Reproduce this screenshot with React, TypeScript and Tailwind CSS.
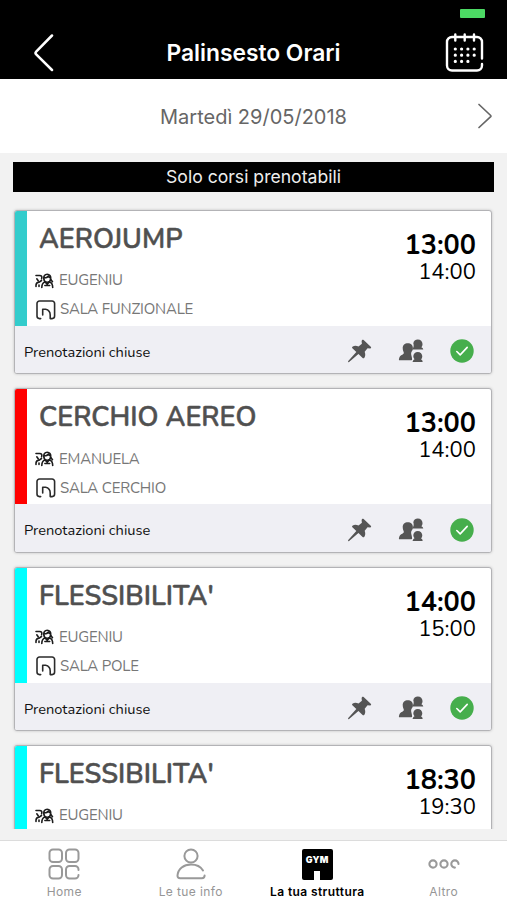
import React from "react";

type Course = {
  title: string;
  trainer: string;
  room?: string;
  start: string;
  end: string;
  stripe: string;
};

const courses: Course[] = [
  { title: "AEROJUMP", trainer: "EUGENIU", room: "SALA FUNZIONALE", start: "13:00", end: "14:00", stripe: "bg-[#33cccc]" },
  { title: "CERCHIO AEREO", trainer: "EMANUELA", room: "SALA CERCHIO", start: "13:00", end: "14:00", stripe: "bg-[#ff0000]" },
  { title: "FLESSIBILITA'", trainer: "EUGENIU", room: "SALA POLE", start: "14:00", end: "15:00", stripe: "bg-[#00ffff]" },
  { title: "FLESSIBILITA'", trainer: "EUGENIU", start: "18:30", end: "19:30", stripe: "bg-[#00ffff]" },
];

function TrainerIcon() {
  return (
    <svg className="h-[16px] w-[19px] shrink-0" viewBox="0 0 19 16" fill="none" stroke="#1c1c1c" strokeWidth="1.600" strokeLinecap="round" strokeLinejoin="round">
      <path d="M1 2.500h3.600c2.200 0 2.600 1.500 2 3.200M1.800 5.800l1.400 2M1 13.500v-1.300c0-1.800 1-2.700 2.900-2.900L6.500 7.500M4 12v1.500" />
      <path d="M8.800 5.800C8.400 3 9.900 1.200 12.200 1.200s3.900 1.800 3.500 4.600c-.2 1.800-1.500 3.400-3.500 3.400S9 7.600 8.800 5.800ZM9 5c2.300 0 3.600-.6 4.200-1.800.5 1 1.200 1.700 2.300 1.800" />
      <path d="M6.800 14.500c0-3.200.9-4.900 3.200-5.600l2.200 2.200 2.200-2.200c2.600.7 3.300 2.400 3.300 5.600M9.900 12.500h4.800M15.800 6.500l1.700 2.200" />
    </svg>
  );
}

function RoomIcon() {
  return (
    <svg className="h-[20px] w-[20px] shrink-0" viewBox="0 0 20 20" fill="none" stroke="#2b2b2b" strokeWidth="1.600" strokeLinecap="round" strokeLinejoin="round">
      <path d="M4.700 18.600H3.500A2.500 2.500 0 0 1 1 16.100V3.500A2.500 2.500 0 0 1 3.500 1h12.600a2.500 2.500 0 0 1 2.500 2.500v12.600a2.500 2.500 0 0 1-2.500 2.500h-1.900V15c0-3.200-1.600-5.200-4.600-5.800H6.700v5.800" />
    </svg>
  );
}

function PinIcon() {
  return (
    <svg className="h-[24px] w-[25px]" viewBox="0 0 26 24" fill="#555">
      <path d="M15.600.7c.5-.6 1.100-.6 1.700-.1l7.400 6.900c.8.800.3 1.800-.7 1.800l-2.600-.1-3 3.700c1 2.900.7 4.900-.5 6.300-.5.6-1.100.6-1.700 0l-4.300-4-9.700 8.300c-.8.600-1.500-.2-.9-1l8.400-9.400-4.100-3.900c-.5-.6-.5-1.100.1-1.500 1.700-1.300 3.700-1.400 6.300-.4l3.500-2.900-.3-2.400c0-.6.1-.9.400-1.300Z" />
    </svg>
  );
}

function GroupIcon() {
  return (
    <svg className="h-[24px] w-[26px]" viewBox="0 0 26 24" fill="#555">
      <path d="M14 10.500H25.300c-.3-1.200-.9-1.700-1.900-2.200.8-.9 1.100-2 1.100-3.200 0-2.700-2-4.600-4.700-4.600-2.400 0-4.300 1.600-4.500 3.900.7 1.500.6 4.200-1.300 6.100Z" />
      <path d="M9.800 4.200c3.100 0 5.100 2 5.100 4.700 0 1.500-.5 2.700-1.200 3.700-.8 1.100-.6 2.500-.3 4 .2 1.200.7 2.100.7 3.900 0 .5-.2.800-.7.800H1.700c-.6 0-.9-.3-.8-.9.300-2.600 1.500-4.300 3.800-5 1-.4 1.400-1.500.9-2.500-.6-1.100-.9-2.400-.9-4 0-2.700 2-4.700 5.100-4.700Z" />
      <path d="M14.600 23h10c.1-1.400-.3-2-1.500-2.600.8-.9 1.200-1.900 1.200-3.100 0-2.500-1.900-4.400-4.500-4.400s-4.500 1.900-4.500 4.400c0 1.200.4 2.100 1.200 2.900-1.200.7-1.800 1.500-1.900 2.800Z" />
    </svg>
  );
}

function CheckIcon() {
  return (
    <svg className="h-[24px] w-[24px]" viewBox="0 0 24 24" fill="none">
      <circle cx="12" cy="12" r="11.700" fill="#46ae4c" />
      <path d="m6.800 12.500 3.400 3.400 7-7.500" stroke="#fff" strokeWidth="1.600" strokeLinecap="round" strokeLinejoin="round" />
    </svg>
  );
}

function CourseCard({ c }: { c: Course }) {
  return (
    <article className="flex h-[164.400px] shrink-0 flex-col overflow-hidden rounded-[3px] border border-[#b3b3b6] bg-white shadow-[0_0_3px_rgba(0,0,0,0.2)]">
      <div className="flex h-[115px] shrink-0">
        <div className={`w-[12px] shrink-0 ${c.stripe}`} />
        <div className="min-w-0 flex-1 pt-[14px]">
          <h2 className="ml-[12px] h-[30px] whitespace-nowrap text-[27px] leading-[30px] font-semibold text-[#505050] [-webkit-text-stroke:0.5px_#505050]">{c.title}</h2>
          <div className="mt-[11px] ml-[8px] flex h-[29px] items-center gap-[5px] text-[15px] tracking-[-0.200px] text-[#777]">
            <TrainerIcon />
            <span>{c.trainer}</span>
          </div>
          {c.room && (
            <div className="ml-[9px] flex h-[29px] items-center gap-[4px] text-[15px] tracking-[-0.200px] text-[#777]">
              <RoomIcon />
              <span>{c.room}</span>
            </div>
          )}
        </div>
        <div className="flex flex-col items-end pt-[21px] pr-[15px] text-black">
          <span className="text-[27px] leading-[27px] font-bold">{c.start}</span>
          <span className="text-[22px] leading-[26px]">{c.end}</span>
        </div>
      </div>
      {c.room && (
        <div className="flex flex-1 items-center bg-[#efeff4] pr-[17px] pl-[9px]">
          <span className="flex-1 pt-[6px] text-[14.600px] text-[#111]">Prenotazioni chiuse</span>
          <div className="flex items-center gap-[26px] pt-[3px]">
            <PinIcon />
            <GroupIcon />
            <CheckIcon />
          </div>
        </div>
      )}
    </article>
  );
}

function Tab({ label, active, children }: { label: string; active?: boolean; children: React.ReactNode }) {
  return (
    <button className={`flex flex-1 flex-col items-center pt-[7px] font-[Inter,sans-serif] text-[12px] leading-[16px] tracking-[0.400px] ${active ? "font-semibold text-black" : "text-[#969696]"}`}>
      <span className="flex h-[32px] w-[32px] items-center justify-center">{children}</span>
      <span className="mt-[4px] whitespace-nowrap">{label}</span>
    </button>
  );
}

export default function App() {
  return (
    <div className="flex h-[900px] w-[507px] flex-col overflow-hidden bg-[#f2f2f2] font-[Nunito,Lato,sans-serif]">
      <header className="flex h-[79px] shrink-0 flex-col bg-black">
        <div className="flex h-[26px] justify-end pt-[9px] pr-[22px]">
          <div className="h-[9px] w-[25px] rounded-[1px] bg-[#4cd964]" />
        </div>
        <div className="flex h-[53px] items-center justify-between pr-[23px] pl-[33px]">
          <svg className="h-[38px] w-[39px]" viewBox="0 0 39 38" fill="none" stroke="#fff" strokeWidth="2.500" strokeLinecap="round" strokeLinejoin="round">
            <path d="M19 1.500 3.200 17.600a2 2 0 0 0 0 2.800L19 36" />
          </svg>
          <h1 className="mr-[10px] pt-px font-[Inter,sans-serif] text-[22.800px] font-semibold text-white">Palinsesto Orari</h1>
          <svg className="h-[39px] w-[39px]" viewBox="0 0 39 39" fill="none" stroke="#fff" strokeLinecap="round">
            <path d="M37 25.500V9a5 5 0 0 0-5-5H7a5 5 0 0 0-5 5v23.500a5 5 0 0 0 5 5h25a5 5 0 0 0 5-5v-1.500M10.300 1.500v6M19.700 1.500v6M29 1.500v6" strokeWidth="2.400" />
            <path d="M10.300 16h.01M16.600 16h.01M22.900 16h.01M29.200 16h.01M10.300 22.200h.01M16.600 22.200h.01M22.900 22.200h.01M29.200 22.200h.01M10.300 28.400h.01M16.600 28.400h.01M22.900 28.400h.01" strokeWidth="3.200" />
          </svg>
        </div>
      </header>

      <div className="flex h-[74px] shrink-0 items-center justify-between bg-white pr-[14px] pl-[14px] font-[Inter,sans-serif] text-[20px] text-[#666]">
        <span className="w-[16px]" />
        <span className="pt-px">Martedì 29/05/2018</span>
        <svg className="h-[26px] w-[16px]" viewBox="0 0 16 26" fill="none" stroke="#666" strokeWidth="1.700" strokeLinecap="round" strokeLinejoin="round">
          <path d="M2 1.500 13.700 12.500a.8.800 0 0 1 0 1.100L2 24.500" />
        </svg>
      </div>

      <main className="flex h-[676px] shrink-0 flex-col overflow-hidden px-[13px] pt-[9px]">
        <div className="flex h-[30px] w-[481px] shrink-0 items-center justify-center bg-black font-[Inter,sans-serif] text-[17.600px] text-[#eee]">Solo corsi prenotabili</div>
        <div className="mt-[18px] mr-[2px] ml-px flex flex-col gap-[14px]">
          {courses.map((c, i) => (
            <CourseCard key={i} c={c} />
          ))}
        </div>
      </main>

      <div className="h-[11px] shrink-0" />
      <nav className="flex h-[60px] shrink-0 border-t border-[#dcdcdc] bg-white pl-px">
        <Tab label="Home">
          <svg className="h-[32px] w-[32px]" viewBox="0 0 32 32" fill="none" stroke="#999" strokeWidth="2" strokeLinecap="round">
            <rect x="1.500" y="1.500" width="12.500" height="12.500" rx="3.500" />
            <rect x="18" y="1.500" width="12.500" height="12.500" rx="3.500" />
            <rect x="1.500" y="18" width="12.500" height="12.500" rx="3.500" />
            <path d="M30.500 22v-.5a3.500 3.500 0 0 0-3.500-3.500h-5.500a3.500 3.500 0 0 0-3.500 3.500V27a3.500 3.500 0 0 0 3.500 3.500H27a3.500 3.500 0 0 0 3.500-3.500" />
          </svg>
        </Tab>
        <Tab label="Le tue info">
          <svg className="h-[32px] w-[32px]" viewBox="0 0 32 32" fill="none" stroke="#999" strokeWidth="2" strokeLinecap="round">
            <circle cx="16" cy="8" r="6.600" />
            <path d="M28 22.500c-2.200-3.700-6.700-6-12-6-7.300 0-13 4.300-13.500 11-.1 1.800.9 2.700 2.600 2.700h21.800c1.800 0 2.700-1 2.700-2.700" />
          </svg>
        </Tab>
        <Tab label="La tua struttura" active>
          <span className="flex h-[31px] w-[31px] flex-col items-center justify-between rounded-[2px] bg-black pt-[5px]">
            <span className="text-[9px] leading-[11px] font-black tracking-[0.300px] text-white">GYM</span>
            <span className="h-[9px] w-[6px] bg-white" />
          </span>
        </Tab>
        <Tab label="Altro">
          <svg className="h-[12px] w-[32px]" viewBox="0 0 32 12" fill="none" stroke="#999" strokeWidth="2.100" strokeLinecap="round">
            <circle cx="5" cy="6" r="3.600" />
            <circle cx="16" cy="6" r="3.600" />
            <path d="M30.500 6a3.600 3.600 0 1 0-3.600 3.600" />
          </svg>
        </Tab>
      </nav>
    </div>
  );
}
